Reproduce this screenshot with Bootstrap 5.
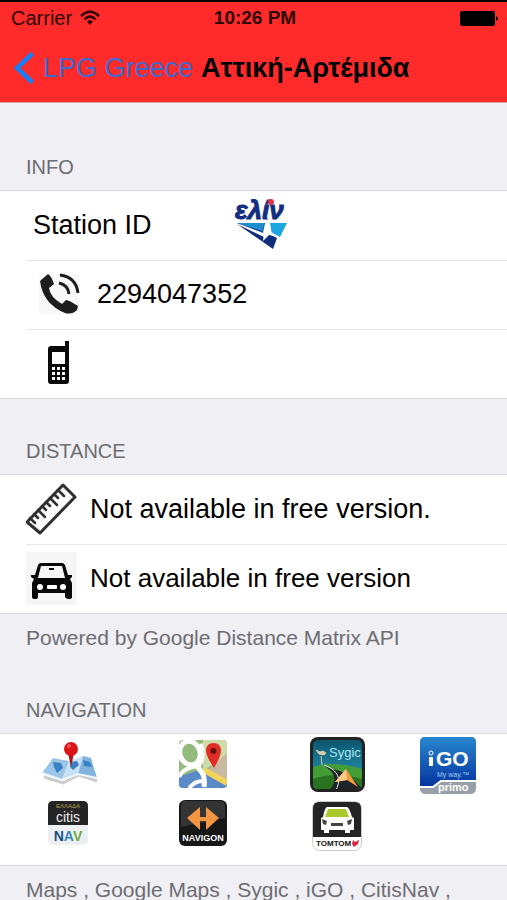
<!DOCTYPE html>
<html lang="el">
<head>
<meta charset="utf-8">
<meta name="viewport" content="width=device-width, initial-scale=1">
<title>LPG Greece</title>
<link rel="stylesheet" href="https://cdn.jsdelivr.net/npm/bootstrap@5.3.0/dist/css/bootstrap.min.css">
<style>
body{background:#efeff4;color:#000;font-family:"Liberation Sans",Arial,sans-serif}
svg{display:block;flex:none}
svg text{font-family:"Liberation Sans",Arial,sans-serif}
.app-top{background:#ff2a2a;border-top:2px solid #000;border-bottom:1px solid #d9a0a4}
.status{height:32px;padding:0 8px 0 11px;color:#2c0505}
.status-carrier{font-size:20px;line-height:32px}
.status-time{font-size:19px;line-height:32px}
.titlebar{height:68px;padding:0 14px}
.back{color:#3c6bd0;font-size:27px;line-height:36px}
.page-title{font-size:27px;line-height:36px}
.sec-title{font-size:20px;line-height:24px;color:#6d6d72;padding:0 26px 11px;margin:0}
.sec-note{font-size:21px;line-height:24px;color:#6d6d72;padding:12px 26px 0;margin:0}
.sec-first{padding-top:52px}
.sec-mid{padding-top:40px}
.sec-nav{padding-top:48px}
.panel{background:#fff;border-top:1px solid #dadade;border-bottom:1px solid #dadade}
.line-item{height:69px;margin-left:26px;padding-bottom:2px;font-size:27px;line-height:34px}
.line-item + .line-item{border-top:1px solid #e6e6e9}
.station{width:204px;padding-left:7px}
.pic{width:64px}
.pic-wide{width:71px}
.drive-text{font-size:26px}
.apps{display:grid;grid-template-columns:3fr 3fr 3fr 2fr;padding:2px 14px 14px 3px;row-gap:1px}
.app-btn{line-height:1}
</style>
<script src="https://cdn.jsdelivr.net/npm/bootstrap@5.3.0/dist/js/bootstrap.bundle.min.js"></script>
</head>
<body>
<header class="app-top">
  <div class="status row g-0 align-items-center">
    <div class="col d-flex align-items-center gap-2">
      <span class="status-carrier">Carrier</span>
      <svg width="20" height="16" viewBox="0 0 20 16" role="img" aria-label="Wi-Fi"><g fill="none" stroke="#2c0505" stroke-width="2.5"><path d="M1 6Q10-2.500 19 6M4.500 9.300Q10 4 15.500 9.300"/></g><path d="M7 11.500Q10 9 13 11.500L10 15z" fill="#2c0505"/></svg>
    </div>
    <strong class="col-auto status-time">10:26 PM</strong>
    <div class="col d-flex justify-content-end">
      <svg width="40" height="15" viewBox="0 0 40 15" role="img" aria-label="Battery"><rect x="1" width="35" height="15" rx="2"/><path d="M37 5Q41 7.500 37 10z"/></svg>
    </div>
  </div>
  <nav class="titlebar d-flex align-items-center gap-2">
    <a class="back d-flex align-items-center gap-2 text-decoration-none text-nowrap" href="#"><svg width="21" height="34" viewBox="0 0 21 34" aria-hidden="true"><path d="M18.500 2.500L3 17L18.500 31.500" fill="none" stroke="#147efb" stroke-width="4.500"/></svg>LPG Greece</a>
    <h1 class="page-title fw-bold text-nowrap m-0">Αττική-Αρτέμιδα</h1>
  </nav>
</header>
<main>
  <section>
    <h2 class="sec-title sec-first">INFO</h2>
    <div class="panel">
      <div class="line-item d-flex align-items-center">
        <span class="station">Station ID</span>
        <svg width="64" height="66" viewBox="0 -7 64 66" role="img" aria-label="ελίν">
          <path d="M7 24H35L33 34z" fill="#164a9f"/><path d="M40 24H57L50 38L42 36z" fill="#1ca5df"/><path d="M7 24H34L33 32z" fill="#208dcc"/><path d="M7 25L34 38L39 35L47 39L43 50L33 43Q20 34 7 25z" fill="#102d7b"/><path d="M37 18L39 32L50 38L39 36L33 42L34 33z" fill="#fff"/>
          <text x="5" y="20" font-size="26" font-weight="bold" font-style="italic" fill="#112e82" stroke="#112e82">ελίν</text><circle cx="41" cy="3" r="3" fill="#e43443"/>
        </svg>
      </div>
      <div class="line-item d-flex align-items-center">
        <span class="pic-wide ps-2"><svg class="ms-1" width="42" height="42" viewBox="0 0 42 42" aria-hidden="true"><rect x="1" y="1" width="40" height="40" fill="#f8f8f8"/><path d="M2 8L10 1Q12 2 14 6L16 11L11 15Q12 24 24 31L28 27Q31 27 40 33L39 37Q34 42 27 40Q5 31 2 8z" fill="#1d1d1d"/><path d="M21 10Q30 12 31 21M22 2Q38 4 40 20" fill="none" stroke="#1d1d1d" stroke-width="3"/></svg></span>
        <span>2294047352</span>
      </div>
      <div class="line-item d-flex align-items-center">
        <svg class="ms-3" width="34" height="46" viewBox="0 0 34 46" role="img" aria-label="Mobile phone"><path d="M8 6H23V1H27V41Q27 44 24 44H9Q6 44 6 41V9Q6 6 9 6z" fill="#090909"/><rect x="10" y="12" width="13" height="12" fill="#fff"/><path d="M10 28.500h3m2 0h3m2 0h3M10 33.500h3m2 0h3m2 0h3M10 38.500h3m2 0h3m2 0h3" stroke="#fff" stroke-width="3"/></svg>
      </div>
    </div>
  </section>
  <section>
    <h2 class="sec-title sec-mid">DISTANCE</h2>
    <div class="panel">
      <div class="line-item d-flex align-items-center">
        <span class="pic"><svg width="52" height="54" viewBox="1 0 52 54" aria-hidden="true"><path d="M2 40L38 3L50 15L15 51Z" fill="#fff" stroke="#303030" stroke-width="3" stroke-linejoin="round"/><path d="M5 36l5 5M9 32l4 4M13 28l7 7M17 24l4 4M21 20l4 4M25 16l7 7M29 12l4 4M33 8l6 6" stroke="#303030" stroke-width="2.500" stroke-linecap="round"/></svg></span>
        <span class="text-nowrap">Not available in free version.</span>
      </div>
      <div class="line-item d-flex align-items-center">
        <span class="pic"><svg width="51" height="53" viewBox="0 0 51 53" aria-hidden="true"><rect width="51" height="53" fill="#f6f6f6"/><path d="M15 11H36Q38 11 39 13L42 23H46V25L44 27L46 31V45Q46 47 43 47T39 45V41H12V45Q12 47 9 47T6 45V31L8 27L5 25V23H9L12 13Q13 11 15 11z" fill="#080808"/><path d="M15 14H36L39 26H12z" fill="#f6f6f6"/><path d="M23 17h5" stroke="#080808" stroke-width="2"/><circle cx="14" cy="35" r="3" fill="#fff"/><circle cx="37" cy="35" r="3" fill="#fff"/><rect x="21" y="33" width="10" height="4" rx="1" fill="#fff"/></svg></span>
        <span class="drive-text text-nowrap">Not available in free version</span>
      </div>
    </div>
    <p class="sec-note">Powered by Google Distance Matrix API</p>
  </section>
  <section>
    <h2 class="sec-title sec-nav">NAVIGATION</h2>
    <div class="panel apps align-items-center">
      <button class="app-btn btn border-0 p-0 d-flex justify-content-center" type="button" aria-label="Maps"><svg width="60" height="50" viewBox="0 3 60 50"><path d="M4 39L23 45L39 37L57 43" fill="none" stroke="#ccc" stroke-width="3"/><path d="M2 35L13 20L29 23L22 42z" fill="#9cc4e7"/><path d="M29 23L43 18L38 36L22 42z" fill="#c8e0f3"/><path d="M43 18L51 20L57 40L38 36z" fill="#82b3df"/><path d="M13 24l8 1 2 5-6 5-3-6zM31 24l6-1 2 4-6 5-3-3zM43 22l7 2 2 5-8-1z" fill="#3a80c5"/><path d="M2 35L22 42L38 36L57 40" fill="none" stroke="#edf6fc" stroke-width="2"/><path d="M28 15L31 29L34 15z" fill="#a91515"/><circle cx="31" cy="11" r="7" fill="#d91518"/><circle cx="29" cy="8" r="2" fill="#f05a50"/></svg></button>
      <button class="app-btn btn border-0 p-0 d-flex justify-content-center" type="button" aria-label="Google Maps"><svg width="48" height="52" viewBox="0 0 48 52"><defs><clipPath id="gClip"><rect width="48" height="48" rx="4"/></clipPath></defs><g clip-path="url(#gClip)"><rect width="48" height="48" fill="#94bb7e"/><path d="M24 0H48V17L24 30z" fill="#cfdca9"/><path d="M29 30L48 13V40z" fill="#c8b9a0"/><path d="M0 48V37L19 30L48 45V48z" fill="#5c89c8"/><path d="M25 30L48 43" stroke="#f2d45a" stroke-width="6"/><path d="M21 4Q25 12 22 21Q18 27 20 29Q27 35 25 47" fill="none" stroke="#fff" stroke-width="5"/><ellipse cx="11" cy="13" rx="10" ry="12" fill="none" stroke="#fff" stroke-width="5" transform="rotate(-18 11 13)"/><path d="M19 26Q3 28 0 37M10 48Q18 39 26 42" fill="none" stroke="#fff" stroke-width="4"/><path d="M27 11Q27 3 34.500 3T42 11Q42 16 35 28Q27 16 27 11z" fill="#e12d27"/><circle cx="34.500" cy="11" r="3" fill="#65110e"/></g></svg></button>
      <button class="app-btn btn border-0 p-0 d-flex justify-content-center" type="button" aria-label="Sygic"><svg width="55" height="59" viewBox="0 0 55 59"><defs><linearGradient id="sSky" x2="0" y2="1"><stop stop-color="#08516c"/><stop offset="1" stop-color="#31a7bb"/></linearGradient><clipPath id="sClip"><rect x="3" y="3" width="49" height="49" rx="5"/></clipPath></defs><rect width="55" height="55" rx="8" fill="#222"/><g clip-path="url(#sClip)"><rect width="55" height="55" fill="url(#sSky)"/><path d="M0 31Q22 22 55 33V55H0z" fill="#439c35"/><path d="M0 43Q25 33 55 43V55H0z" fill="#28731f"/><path d="M13 28Q21 32 30 34Q43 40 55 55H17Q34 40 13 28z" fill="#1f2429"/><path d="M14 28Q36 36 25 55" fill="none" stroke="#eee" stroke-width="1"/><path d="M36 32L48 50L37 43L25 45z" fill="#f39a3c"/><path d="M36 32L37 43L25 45z" fill="#ffc98d"/></g><path d="M6 13l4 2 3-1 3 2-2 2-5-1zM11 19l1 9" fill="#d8c9a8" stroke="#d8c9a8"/><text x="19" y="20" font-size="13" fill="#a9e7f4">Sygic</text></svg></button>
      <button class="app-btn btn border-0 p-0 d-flex justify-content-center" type="button" aria-label="iGO My way primo"><svg width="56" height="60" viewBox="0 0 56 60"><defs><linearGradient id="iBlue" x2="0" y2="1"><stop stop-color="#2887ce"/><stop offset="1" stop-color="#0635a0"/></linearGradient></defs><rect y="1" width="56" height="57" rx="5" fill="#999fa6"/><path d="M5 1H51Q56 1 56 6V44H21L13 50H0V6Q0 1 5 1z" fill="url(#iBlue)"/><path d="M0 51H13L21 45H56" fill="none" stroke="#fff" stroke-width="2"/><path d="M11 21V30" stroke="#fff" stroke-width="4"/><circle cx="11" cy="17" r="2" fill="none" stroke="#fff"/><text x="16" y="30" font-size="21" font-weight="bold" fill="#fff">GO</text><text x="17" y="41" font-size="7" fill="#9bcdf2">My way.™</text><text x="18" y="55" font-size="11" font-weight="bold" fill="#fff">primo</text></svg></button>
      <button class="app-btn btn border-0 p-0 d-flex justify-content-center" type="button" aria-label="CitisNav"><svg width="44" height="48" viewBox="2 0 44 48"><rect x="2" y="1" width="40" height="44" rx="5" fill="#edf0f3"/><path d="M7 1H37Q42 1 42 6V25H2V6Q2 1 7 1z" fill="#252525"/><text x="22" y="8" font-size="6" text-anchor="middle" fill="#b7a446">ΕΛΛΑΔΑ</text><text x="22" y="22" font-size="14" text-anchor="middle" fill="#eee">citis</text><text x="22" y="41" font-size="14" font-weight="bold" text-anchor="middle"><tspan fill="#174e82">N</tspan><tspan fill="#3888b9">A</tspan><tspan fill="#76a940">V</tspan></text></svg></button>
      <button class="app-btn btn border-0 p-0 d-flex justify-content-center" type="button" aria-label="Navigon"><svg width="48" height="48" viewBox="0 0 48 48"><rect width="48" height="46" rx="6" fill="#171717"/><path d="M6 1H42Q46 1 46 6V18Q22 23 2 27V6Q2 1 6 1z" fill="#343434"/><path d="M21 7V30L8 18zM27 7V30L40 18z" fill="#f29643"/><path d="M20 17h8v4h-8z" fill="#f29643"/><text x="24" y="41" font-size="9" font-weight="bold" text-anchor="middle" fill="#fff">NAVIGON</text></svg></button>
      <button class="app-btn btn border-0 p-0 d-flex justify-content-center" type="button" aria-label="TomTom"><svg width="50" height="54" viewBox="0 -4 50 54"><rect x=".5" y=".5" width="49" height="49" rx="7" fill="#fff" stroke="#ccc"/><path d="M7 1H43Q49 1 49 7V36H1V7Q1 1 7 1z" fill="#242424"/><path d="M15 6H35Q37 6 40 16L42 17V29H38V32H33V29H17V32H12V29H9V17L11 16Q13 6 15 6z" fill="#fff"/><path d="M16 8H34L37 16H13z" fill="#a7c92b"/><path d="M10 18l5 2-1 4-3-1zM40 18l-5 2 1 4 3-1zM19 22h12v3H19z" fill="#444"/><text x="4" y="45" font-size="8" font-weight="bold" fill="#111">TOMTOM</text><path d="M41 39l2 2 4-2-1 4-4 3-2-3z" fill="#df2435"/></svg></button>
    </div>
    <p class="sec-note">Maps , Google Maps , Sygic , iGO , CitisNav ,</p>
  </section>
</main>
</body>
</html>
